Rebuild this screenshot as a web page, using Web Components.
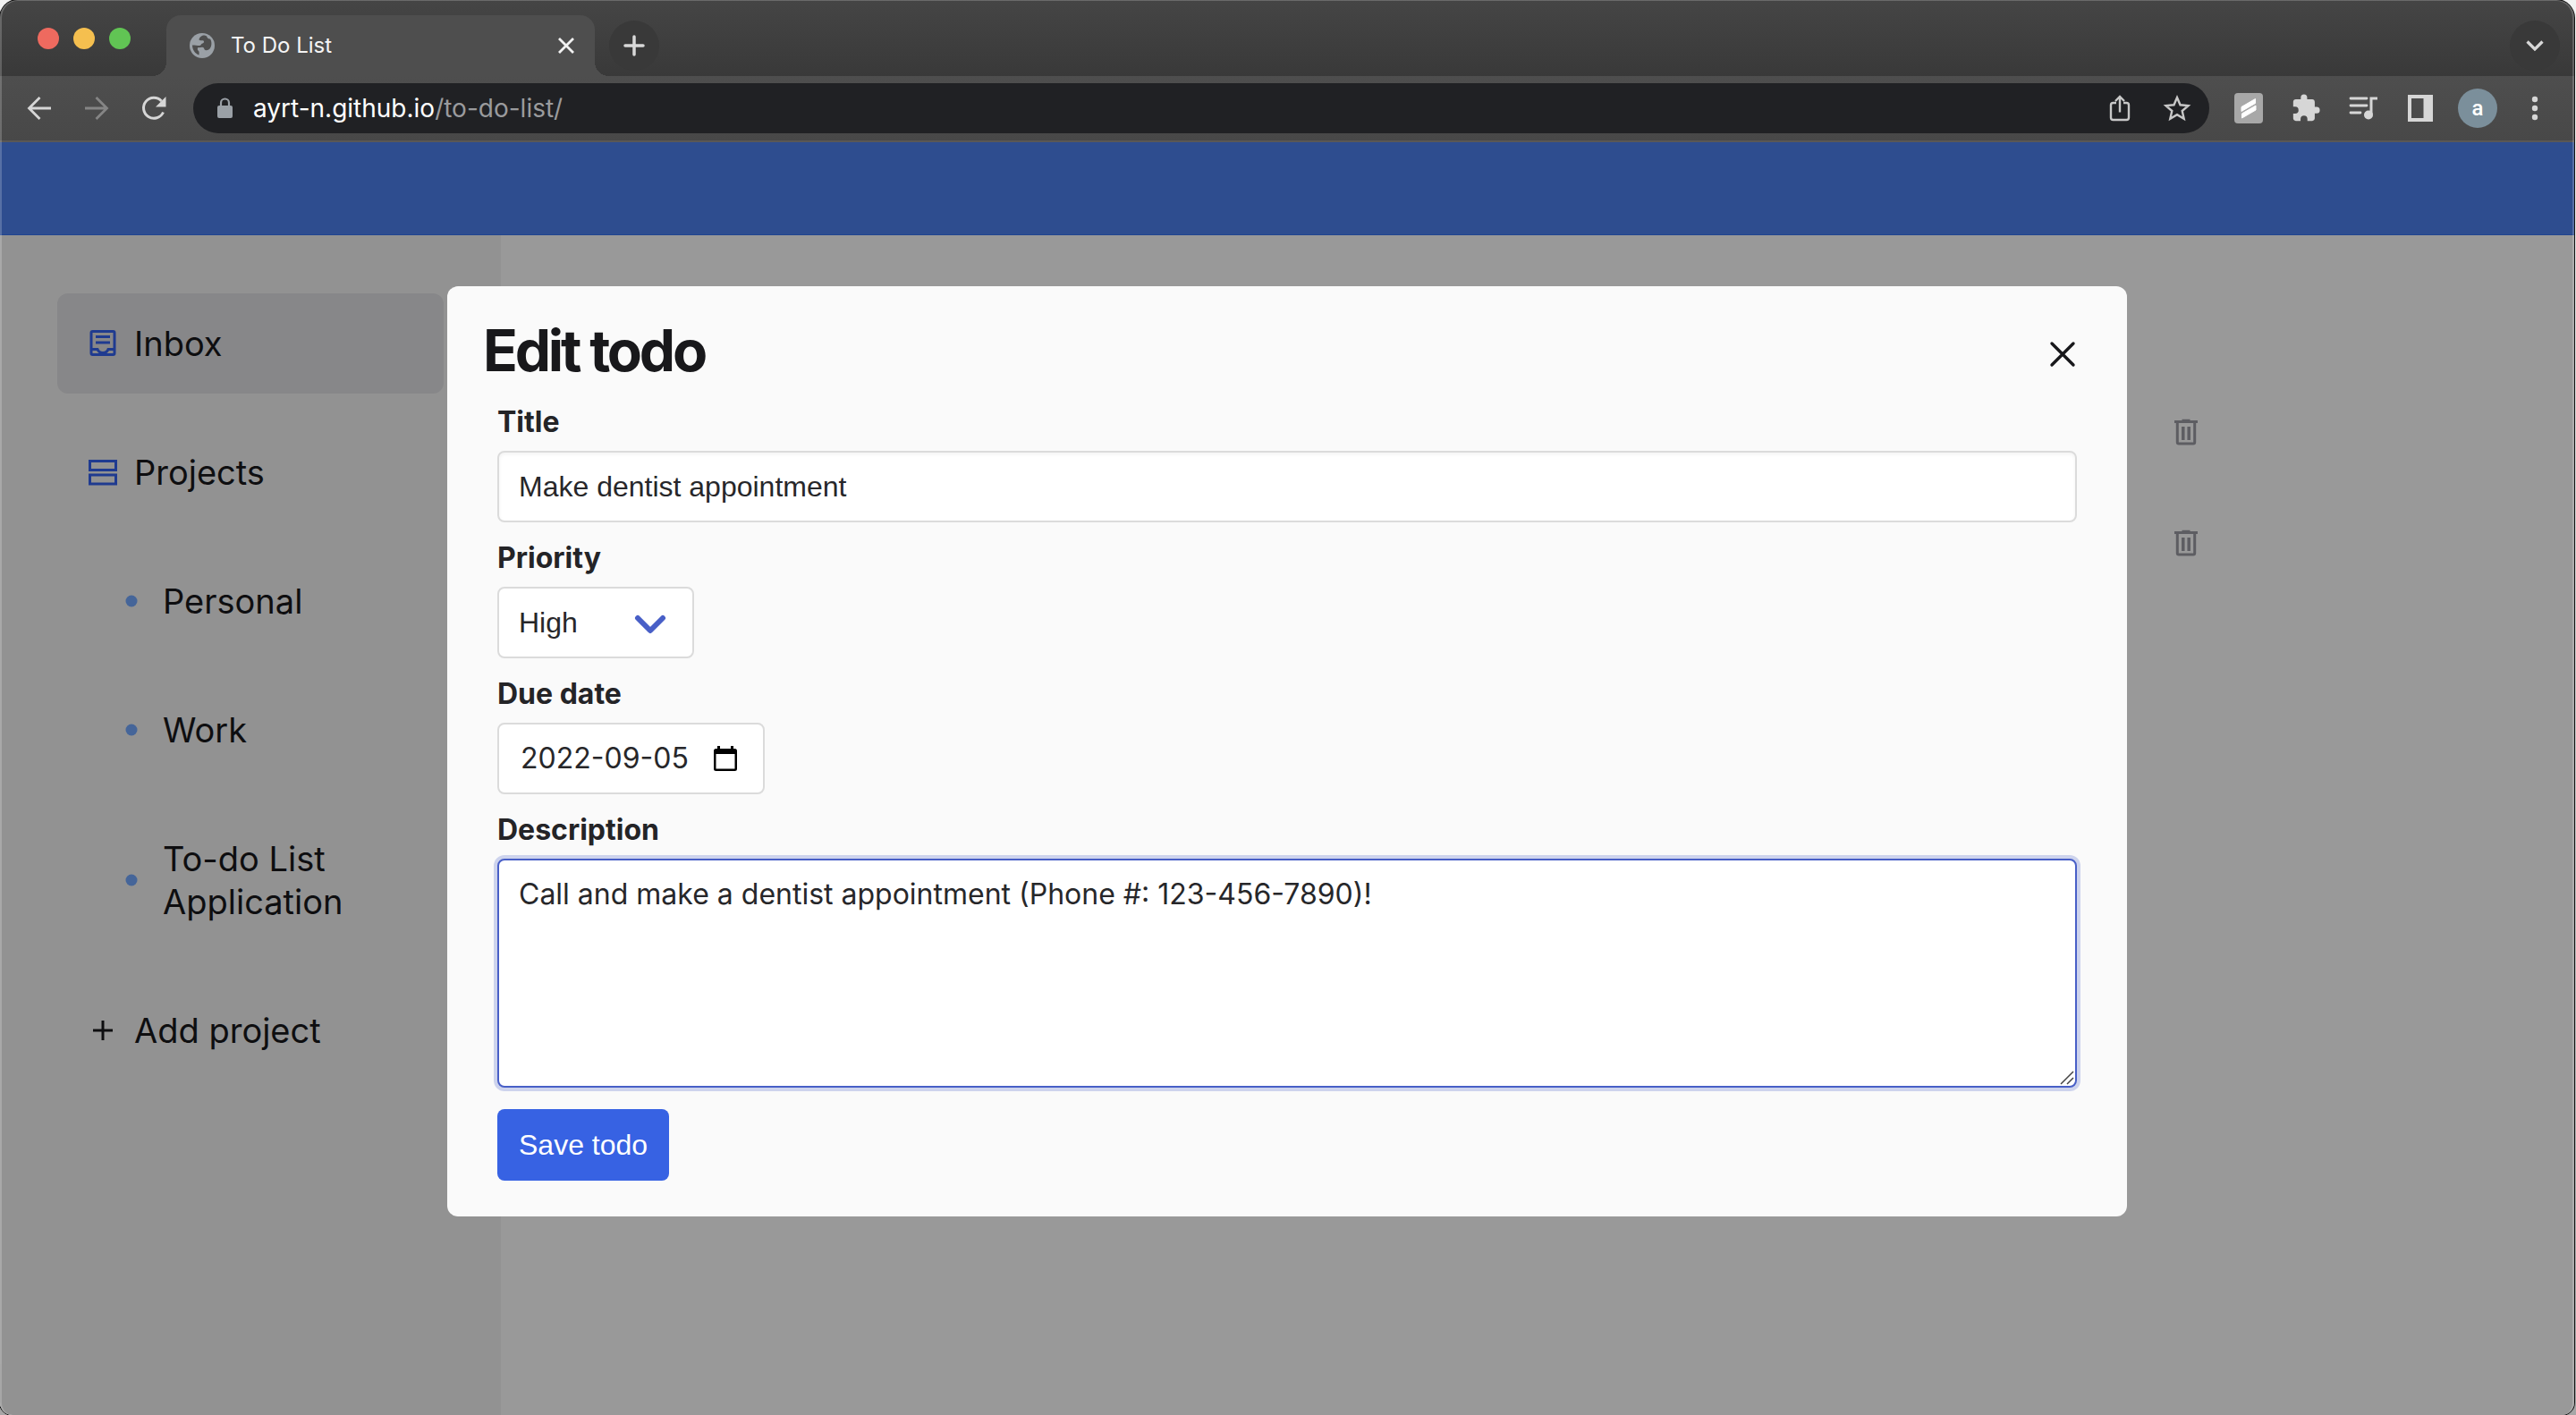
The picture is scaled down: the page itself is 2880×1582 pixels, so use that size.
<!DOCTYPE html>
<html lang="en">
<head>
<meta charset="utf-8">
<title>To Do List</title>
<style>
  html, body { margin: 0; height: 100%; }
  body { font-family: Inter, "Liberation Sans", sans-serif; color: #18181b; background: linear-gradient(#f2f2f2, #a6a6a6); overflow: hidden; }
</style>
</head>
<body>
<browser-window>
  <tab-strip slot="chrome">To Do List</tab-strip>
  <tool-bar slot="chrome"></tool-bar>
  <todo-app>
    <side-nav slot="nav">
      <nav-item icon="inbox" active>Inbox</nav-item>
      <nav-item icon="projects">Projects</nav-item>
      <nav-item icon="dot" nested>Personal</nav-item>
      <nav-item icon="dot" nested>Work</nav-item>
      <nav-item icon="dot" nested>To-do List Application</nav-item>
      <nav-item icon="plus">Add project</nav-item>
    </side-nav>
    <todo-row slot="list"></todo-row>
    <todo-row slot="list"></todo-row>
    <edit-dialog slot="dialog"></edit-dialog>
  </todo-app>
</browser-window>

<script>
const base = `
  :host, *, *::before, *::after { box-sizing: border-box; }
  button { font: inherit; color: inherit; background: none; border: 0; padding: 0; margin: 0; display: flex; align-items: center; justify-content: center; cursor: pointer; }
  svg { display: block; flex: none; }
`;
function define(name, render) {
  customElements.define(name, class extends HTMLElement {
    constructor() {
      super();
      this.attachShadow({ mode: 'open' });
    }
    connectedCallback() {
      const t = document.createElement('template');
      t.innerHTML = render(this);
      this.shadowRoot.replaceChildren(t.content.cloneNode(true));
    }
  });
}

define('browser-window', () => `
<style>${base}
  :host { display: flex; flex-direction: column; position: relative; min-height: 100vh; margin-right: 2px; overflow: hidden;
    border-radius: 20px 20px 14px 14px; background: #4a4a4a; box-shadow: 0 0 0 1px #111; }
  :host::after { content: ""; position: absolute; inset: 0; border-radius: inherit; pointer-events: none;
    border: solid rgba(255,255,255,.2); border-width: 1px 2px 0 2px; }
  ::slotted(todo-app) { flex: 1; }
</style>
<slot name="chrome"></slot><slot></slot>`);

define('tab-strip', () => `
<style>${base}
  :host { display: flex; align-items: flex-end; height: 85px; padding-right: 16px; color: #f5f5f5;
    background: linear-gradient(#454545, #393939); font-size: 24px; line-height: 32px; }
  .lights { display: flex; gap: 16px; padding: 0 40px 30px 42px; }
  .lights i { width: 24px; height: 24px; border-radius: 50%; }
  .tab { display: flex; align-items: center; width: 479px; height: 68px; padding: 0 20px 0 26px;
    background: #4e4e4e; border-radius: 16px 16px 0 0; position: relative; }
  .tab::before, .tab::after { content: ""; position: absolute; bottom: 0; width: 16px; height: 16px; }
  .tab::before { right: 100%; background: radial-gradient(circle at 0 0, transparent 16px, #4e4e4e 16px); }
  .tab::after { left: 100%; background: radial-gradient(circle at 100% 0, transparent 16px, #4e4e4e 16px); }
  .title { flex: 1; padding-left: 18px; }
  .round { width: 56px; height: 56px; border-radius: 50%; background: #393939; margin-bottom: 6px; }
  .new { margin-left: 16px; }
  .more { margin-left: auto; }
</style>
<div class="lights"><i style="background:#ee6a5f"></i><i style="background:#f5bf4f"></i><i style="background:#61c454"></i></div>
<div class="tab">
  <svg width="28" height="28" viewBox="0 0 28 28"><circle cx="14" cy="14" r="14" fill="#9aa0a6"/><path d="M15 2.500c-3 1-4.500 3-4.500 5 1.500 1.500 3.500 0 5 1 1 1 .5 2.500-1 3-2 .5-1.500 2.500-3.500 2.500-2.500 0-5-.5-8-.5 0 5 3 9.500 7.500 11 0-2 .5-3.500-.5-4.500-1.500-1-1.500-3-.5-4 2 .5 3.500-.5 5.500 0 1.500.5 1 2.500 2.500 3 2 .5 3.500 0 5-1.500 2.500-3 2.500-8 .5-11-1.500 0-3-.5-3.500-2 0-1.500-2-2-4.500-2z" fill="#4e4e4e"/></svg>
  <span class="title"><slot></slot></span>
  <button aria-label="Close tab"><svg width="24" height="24" viewBox="0 0 24 24" stroke="#f1f1f1" stroke-width="2.800"><path d="M4 4l16 16M20 4L4 20"/></svg></button>
</div>
<button class="round new" aria-label="New tab"><svg width="24" height="24" viewBox="0 0 24 24" stroke="#d8d8d8" stroke-width="3.500" stroke-linecap="round"><path d="M12 2v20M2 12h20"/></svg></button>
<button class="round more" aria-label="Search tabs"><svg width="24" height="24" viewBox="0 0 24 24" fill="none" stroke="#d8d8d8" stroke-width="3.200"><path d="M3.500 7.500l8.500 8.500 8.500-8.500"/></svg></button>`);

define('tool-bar', () => `
<style>${base}
  :host { display: flex; align-items: center; height: 74px; padding: 0 24px 0 24px; background: linear-gradient(#4e4e4e, #484848);
    border-bottom: 2px solid #5a5856; color: #fff; font-size: 28px; line-height: 36px; }
  .nav { display: flex; gap: 24px; padding-right: 24px; }
  .nav button { width: 40px; height: 40px; }
  .omni { flex: 1; display: flex; align-items: center; height: 56px; border-radius: 28px; background: #202124; padding: 0 16px 0 25px; }
  .url { flex: 1; padding-left: 22px; }
  .url span { color: #9a9b9d; }
  .omni button { width: 40px; height: 40px; margin-left: 24px; }
  .tools { display: flex; align-items: center; gap: 24px; padding-left: 24px; }
  .tools button { width: 40px; height: 40px; }
  .tools .avatar { width: 44px; height: 44px; margin: 0 -2px; border-radius: 50%; background: #7b8f9b; font-size: 24px; line-height: 24px; font-family: Roboto, sans-serif; font-weight: 500; }
</style>
<div class="nav">
  <button aria-label="Back"><svg width="28" height="28" viewBox="0 0 28 28" fill="none" stroke="#d6d6d6" stroke-width="2.800"><path d="M27 14H3M14.500 2L2.500 14l12 12"/></svg></button>
  <button aria-label="Forward"><svg width="28" height="28" viewBox="0 0 28 28" fill="none" stroke="#858585" stroke-width="2.800"><path d="M1 14h24M13.500 2l12 12-12 12"/></svg></button>
  <button aria-label="Reload"><svg width="28" height="28" viewBox="0 0 28 28"><path d="M24.500 18.500A11.500 11.500 0 1 1 22.500 6" fill="none" stroke="#d6d6d6" stroke-width="3"/><path d="M27.500 1v11.500H16z" fill="#d6d6d6"/></svg></button>
</div>
<div class="omni">
  <svg width="20" height="24" viewBox="0 0 20 24"><rect x="2" y="9" width="17" height="14" rx="2" fill="#9aa0a6"/><path d="M6 10V6a4.500 4.500 0 0 1 9 0v4" fill="none" stroke="#9aa0a6" stroke-width="2.200"/></svg>
  <div class="url">ayrt-n.github.io<span>/to-do-list/</span></div>
  <button aria-label="Share"><svg width="28" height="32" viewBox="0 0 28 32" fill="none" stroke="#c8c8c8" stroke-width="2.400"><path d="M10 10H6.500Q4 10 4 12.500v14Q4 29 6.500 29h15q2.500 0 2.500-2.500v-14Q24 10 21.500 10H18M14 20.500V3M9 8l5-5 5 5"/></svg></button>
  <button aria-label="Bookmark"><svg width="32" height="32" viewBox="0 0 32 32" fill="none" stroke="#c8c8c8" stroke-width="2.400"><path d="M16 4l3.500 8.300 9 .8-6.800 5.900 2 8.800L16 23.200l-7.700 4.600 2-8.800-6.800-5.900 9-.8z"/></svg></button>
</div>
<div class="tools">
  <button aria-label="Extension"><svg width="32" height="34" viewBox="0 0 32 34"><rect width="32" height="34" rx="4" fill="#a8a8a8"/><path d="M8 15.500L23.500 6.500v5L8 20.500zM8.500 23L24 14v5L8.500 28z" fill="#fff" stroke="#fff" stroke-linejoin="round"/></svg></button>
  <button aria-label="Extensions"><svg width="34" height="34" viewBox="0 0 24 24" fill="#d6d6d6"><path d="M20.500 11H19V7c0-1.100-.9-2-2-2h-4V3.500a2.500 2.500 0 0 0-5 0V5H4c-1.100 0-2 .9-2 2v3.800h1.500a2.700 2.700 0 0 1 0 5.400H2V20c0 1.100.9 2 2 2h3.800v-1.500a2.700 2.700 0 0 1 5.400 0V22H17c1.100 0 2-.9 2-2v-4h1.500a2.500 2.500 0 0 0 0-5z"/></svg></button>
  <button aria-label="Media"><svg width="34" height="32" viewBox="0 0 34 32"><path d="M3 5h18M3 13h18M3 21h11" stroke="#d6d6d6" stroke-width="2.800" stroke-linecap="round"/><path d="M26 23V5h7" fill="none" stroke="#d6d6d6" stroke-width="3"/><circle cx="23" cy="23.500" r="5" fill="#d6d6d6"/></svg></button>
  <button aria-label="Side panel"><svg width="28" height="30" viewBox="0 0 28 30"><path fill-rule="evenodd" d="M0 0h28v30H0zM4 4v22h13.500V4z" fill="#d6d6d6"/></svg></button>
  <button class="avatar" aria-label="Profile">a</button>
  <button aria-label="Menu"><svg width="8" height="28" viewBox="0 0 8 28" fill="#d6d6d6"><circle cx="4" cy="4" r="3.200"/><circle cx="4" cy="14" r="3.200"/><circle cx="4" cy="24" r="3.200"/></svg></button>
</div>`);

define('todo-app', () => `
<style>${base}
  :host { display: flex; flex-direction: column; position: relative; background: #fff; }
  header { height: 104px; background: #4e80ee; border-bottom: 1px solid #3673f0; }
  .body { flex: 1; display: flex; }
  main { flex: 1; padding: 158px 40px 40px; }
  .list { display: flex; flex-direction: column; max-width: 1476px; margin: 0 auto; }
</style>
<header></header>
<div class="body">
  <slot name="nav"></slot>
  <main><div class="list"><slot name="list"></slot></div></main>
</div>
<slot name="dialog"></slot>`);

define('side-nav', () => `
<style>${base}
  :host { display: block; flex: none; width: 560px; padding: 65px 64px; background: #f3f3f3; }
  nav { display: flex; flex-direction: column; gap: 32px; }
</style>
<nav><slot></slot></nav>`);

const navIcons = {
  inbox: `<svg width="36" height="36" viewBox="0 0 36 36" fill="none" stroke="#3563f0" stroke-width="3"><rect x="6" y="4.500" width="26" height="26" rx="1.500"/><path d="M11 10.500h16M11 17h16M5 24.500h8q1.500 4 6 4t6-4h8"/></svg>`,
  projects: `<svg width="36" height="36" viewBox="0 0 36 36" fill="none" stroke="#3563f0" stroke-width="3"><path d="M4.500 5.500h29v10h-29zM4.500 21h29v10h-29z"/></svg>`,
  dot: `<svg width="36" height="36" viewBox="0 0 36 36"><circle cx="19" cy="18" r="6.500" fill="#73a8ff"/></svg>`,
  plus: `<svg width="36" height="36" viewBox="0 0 36 36" stroke="#18181b" stroke-width="3"><path d="M19 7v22M8 18h22"/></svg>`
};
define('nav-item', el => `
<style>${base}
  :host { display: block; }
  a { display: flex; align-items: center; gap: 18px; padding: 32px; border-radius: 12px; font-size: 38px; line-height: 48px; color: #18181b; text-decoration: none; }
  :host([active]) a { background: #e1e1e4; }
  :host([nested]) a { padding-left: 64px; }
</style>
<a href="#">${navIcons[el.getAttribute('icon')]}<span><slot></slot></span></a>`);

define('todo-row', () => `
<style>${base}
  :host { display: flex; justify-content: flex-end; align-items: center; height: 124px; }
</style>
<button aria-label="Delete todo"><svg width="26" height="30" viewBox="0 0 26 30" fill="none" stroke="#9b9ba3" stroke-width="3"><path d="M0 3.500h26M8.500 2.200h9M3.300 4v22.500q0 1.500 1.500 1.500h16.400q1.500 0 1.500-1.500V4"/><path stroke-width="3.500" d="M9.800 9v15M16.200 9v15"/></svg></button>`);

define('edit-dialog', () => `
<style>${base}
  :host { position: absolute; inset: 0; display: flex; align-items: flex-start; justify-content: center; padding: 161px 24px 24px; background: rgba(0,0,0,.4); }
  section { width: 1878px; max-width: 100%; padding: 40px; border-radius: 12px; background: #fafafa; }
  .head { display: flex; justify-content: space-between; margin-bottom: 16px; }
  h1 { margin: 0; font-size: 64px; line-height: 64px; font-weight: 700; letter-spacing: -0.05em; }
  .close { width: 64px; height: 72px; }
  form { display: flex; flex-direction: column; align-items: flex-start; gap: 16px; padding: 0 16px; }
</style>
<section role="dialog" aria-labelledby="heading">
  <div class="head">
    <h1 id="heading">Edit todo</h1>
    <button class="close" aria-label="Close"><svg width="32" height="32" viewBox="0 0 32 32" stroke="#18181b" stroke-width="3.400" stroke-linecap="round"><path d="M4 4l24 24M28 4L4 28"/></svg></button>
  </div>
  <form>
    <form-field kind="text" label="Title" value="Make dentist appointment"></form-field>
    <form-field kind="select" label="Priority"></form-field>
    <form-field kind="date" label="Due date" value="2022-09-05"></form-field>
    <form-field kind="area" label="Description" value="Call and make a dentist appointment (Phone #: 123-456-7890)!"></form-field>
    <save-button>Save todo</save-button>
  </form>
</section>`);

const controls = {
  text: v => `<input id="c" class="box sans" type="text" value="${v}">`,
  select: () => `<div class="pick"><select id="c" class="box sans"><option>High</option><option>Medium</option><option>Low</option></select>
    <svg width="36" height="22" viewBox="0 0 36 22" fill="none" stroke="#485fc7" stroke-width="6" stroke-linecap="round" stroke-linejoin="round"><path d="M4 4l14 14L32 4"/></svg></div>`,
  date: v => `<div class="box date"><input id="c" type="text" value="${v}" size="10">
    <button type="button" aria-label="Show date picker"><svg width="26" height="28" viewBox="0 0 26 28"><path fill-rule="evenodd" d="M4 0h3v3h12V0h3v3h1.500Q26 3 26 5.500v20q0 2.500-2.500 2.500h-21Q0 28 0 25.500v-20Q0 3 2.500 3H4zM2.500 9v16.500h21V9z"/></svg></button></div>`,
  area: v => `<div class="wrap"><textarea id="c" class="box">${v}</textarea>
    <svg class="grip" width="16" height="16" viewBox="0 0 16 16" stroke="#444" stroke-width="1.500"><path d="M1 15L15 1M8 15l7-7"/></svg></div>`
};
define('form-field', el => `
<style>${base}
  :host { display: flex; flex-direction: column; align-items: flex-start; gap: 8px; }
  :host([kind="text"]), :host([kind="area"]) { align-self: stretch; align-items: stretch; }
  label { font-size: 32px; line-height: 48px; font-weight: 700; color: #242427; }
  .box { display: block; width: 100%; height: 80px; margin: 0; padding: 0 22px; border: 2px solid #dbdbdb; border-radius: 8px; background: #fff; color: #27272a; outline: 0;
    font: 32px/48px Inter, "Liberation Sans", sans-serif; }
  .sans { font-family: "Liberation Sans", sans-serif; }
  input.box { box-shadow: inset 0 2px 4px rgba(10,10,10,.05); }
  .pick { position: relative; width: 220px; }
  .pick select { appearance: none; }
  .pick svg { position: absolute; right: 31px; top: 31px; pointer-events: none; }
  .date { display: flex; align-items: center; justify-content: space-between; width: 299px; padding: 0 29px 0 24px; }
  .date input { width: 208px; border: 0; padding: 0; outline: 0; background: none; font: inherit; color: inherit; }
  .wrap { position: relative; }
  textarea.box { height: 256px; padding: 14px 22px; resize: none; border-color: #485fc7; box-shadow: 0 0 0 4px rgba(72,95,199,.25); }
  .grip { position: absolute; right: 3px; bottom: 3px; }
</style>
<label for="c">${el.getAttribute('label')}</label>
${controls[el.getAttribute('kind')](el.getAttribute('value'))}`);

define('save-button', () => `
<style>${base}
  :host { display: block; margin-top: 8px; }
  button { height: 80px; padding: 0 24px; border-radius: 8px; background: #3762e3; color: #fff; font: 32px/48px "Liberation Sans", sans-serif; }
</style>
<button type="submit"><slot></slot></button>`);
</script>
</body>
</html>
